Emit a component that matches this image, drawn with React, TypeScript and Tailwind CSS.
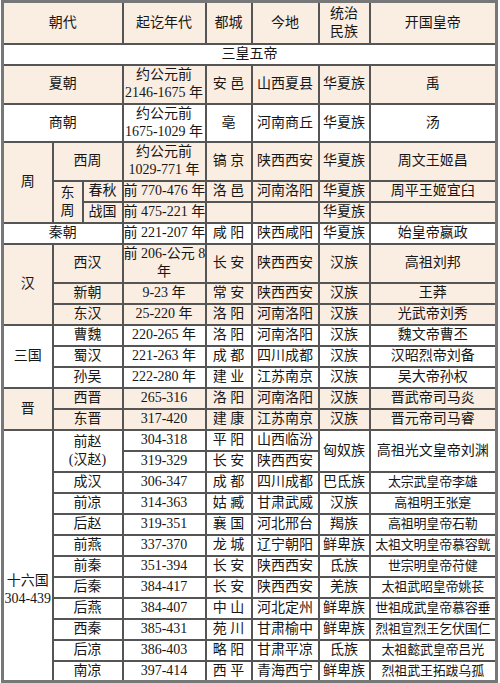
import React from 'react'

const cell = 'border-2 border-[#555] text-center align-middle p-0 leading-[18px] whitespace-nowrap'

const sixteen = [
  ['成汉', '306-347', '成 都', '四川成都', '巴氐族', '太宗武皇帝李雄'],
  ['前凉', '314-363', '姑 臧', '甘肃武威', '汉族', '高祖明王张寔'],
  ['后赵', '319-351', '襄 国', '河北邢台', '羯族', '高祖明皇帝石勒'],
  ['前燕', '337-370', '龙 城', '辽宁朝阳', '鲜卑族', '太祖文明皇帝慕容皝'],
  ['前秦', '351-394', '长 安', '陕西西安', '氐族', '世宗明皇帝苻健'],
  ['后秦', '384-417', '长 安', '陕西西安', '羌族', '太祖武昭皇帝姚苌'],
  ['后燕', '384-407', '中 山', '河北定州', '鲜卑族', '世祖成武皇帝慕容垂'],
  ['西秦', '385-431', '苑 川', '甘肃榆中', '鲜卑族', '烈祖宣烈王乞伏国仁'],
  ['后凉', '386-403', '略 阳', '甘肃平凉', '氐族', '太祖懿武皇帝吕光'],
  ['南凉', '397-414', '西 平', '青海西宁', '鲜卑族', '烈祖武王拓跋乌孤'],
]

const peach = 'bg-[#faede2]'

export default function App() {
  return (
    <div className="w-[500px] h-[683px] bg-white overflow-hidden text-[#161616] text-[14px]" style={{ fontFamily: '"Liberation Serif", "Noto Sans CJK SC", serif' }}>
      <table className="ml-px w-[497px] table-fixed border-collapse border-[3px] border-[#777]">
        <colgroup>
          <col className="w-[50px]" />
          <col className="w-[30px]" />
          <col className="w-[40px]" />
          <col className="w-[83px]" />
          <col className="w-[46px]" />
          <col className="w-[67px]" />
          <col className="w-[51px]" />
          <col />
        </colgroup>
        <tbody>
          <tr className={`h-[42px] ${peach}`}>
            <td colSpan={3} className={cell}>朝代</td>
            <td className={cell}>起讫年代</td>
            <td className={cell}>都城</td>
            <td className={cell}>今地</td>
            <td className={cell}>统治<br />民族</td>
            <td className={cell}>开国皇帝</td>
          </tr>
          <tr className="h-[21px]">
            <td colSpan={8} className={cell}>三皇五帝</td>
          </tr>
          <tr className={`h-[39px] ${peach}`}>
            <td colSpan={3} className={cell}>夏朝</td>
            <td className={cell}>约公元前<br />2146-1675 年</td>
            <td className={cell}>安 邑</td>
            <td className={cell}>山西夏县</td>
            <td className={cell}>华夏族</td>
            <td className={cell}>禹</td>
          </tr>
          <tr className="h-[37px]">
            <td colSpan={3} className={cell}>商朝</td>
            <td className={cell}>约公元前<br />1675-1029 年</td>
            <td className={cell}>亳</td>
            <td className={cell}>河南商丘</td>
            <td className={cell}>华夏族</td>
            <td className={cell}>汤</td>
          </tr>
          <tr className={`h-[39px] ${peach}`}>
            <td rowSpan={3} className={cell}>周</td>
            <td colSpan={2} className={cell}>西周</td>
            <td className={cell}>约公元前<br />1029-771 年</td>
            <td className={cell}>镐 京</td>
            <td className={cell}>陕西西安</td>
            <td className={cell}>华夏族</td>
            <td className={cell}>周文王姬昌</td>
          </tr>
          <tr className={`h-[21px] ${peach}`}>
            <td rowSpan={2} className={cell}>东<br />周</td>
            <td className={cell}>春秋</td>
            <td className={cell}>前 770-476 年</td>
            <td className={cell}>洛 邑</td>
            <td className={cell}>河南洛阳</td>
            <td className={cell}>华夏族</td>
            <td className={cell}>周平王姬宜臼</td>
          </tr>
          <tr className={`h-[21px] ${peach}`}>
            <td className={cell}>战国</td>
            <td className={cell}>前 475-221 年</td>
            <td className={cell}></td>
            <td className={cell}></td>
            <td className={cell}>华夏族</td>
            <td className={cell}></td>
          </tr>
          <tr className="h-[21px]">
            <td colSpan={3} className={cell}>秦朝</td>
            <td className={cell}>前 221-207 年</td>
            <td className={cell}>咸 阳</td>
            <td className={cell}>陕西咸阳</td>
            <td className={cell}>华夏族</td>
            <td className={cell}>始皇帝嬴政</td>
          </tr>
          <tr className={`h-[39px] ${peach}`}>
            <td rowSpan={3} className={cell}>汉</td>
            <td colSpan={2} className={cell}>西汉</td>
            <td className={cell}>前 206-公元 8<br />年</td>
            <td className={cell}>长 安</td>
            <td className={cell}>陕西西安</td>
            <td className={cell}>汉族</td>
            <td className={cell}>高祖刘邦</td>
          </tr>
          <tr className={`h-[21px] ${peach}`}>
            <td colSpan={2} className={cell}>新朝</td>
            <td className={cell}>9-23 年</td>
            <td className={cell}>常 安</td>
            <td className={cell}>陕西西安</td>
            <td className={cell}>汉族</td>
            <td className={cell}>王莽</td>
          </tr>
          <tr className={`h-[21px] ${peach}`}>
            <td colSpan={2} className={cell}>东汉</td>
            <td className={cell}>25-220 年</td>
            <td className={cell}>洛 阳</td>
            <td className={cell}>河南洛阳</td>
            <td className={cell}>汉族</td>
            <td className={cell}>光武帝刘秀</td>
          </tr>
          <tr className="h-[21px]">
            <td rowSpan={3} className={cell}>三国</td>
            <td colSpan={2} className={cell}>曹魏</td>
            <td className={cell}>220-265 年</td>
            <td className={cell}>洛 阳</td>
            <td className={cell}>河南洛阳</td>
            <td className={cell}>汉族</td>
            <td className={cell}>魏文帝曹丕</td>
          </tr>
          <tr className="h-[21px]">
            <td colSpan={2} className={cell}>蜀汉</td>
            <td className={cell}>221-263 年</td>
            <td className={cell}>成 都</td>
            <td className={cell}>四川成都</td>
            <td className={cell}>汉族</td>
            <td className={cell}>汉昭烈帝刘备</td>
          </tr>
          <tr className="h-[21px]">
            <td colSpan={2} className={cell}>孙吴</td>
            <td className={cell}>222-280 年</td>
            <td className={cell}>建 业</td>
            <td className={cell}>江苏南京</td>
            <td className={cell}>汉族</td>
            <td className={cell}>吴大帝孙权</td>
          </tr>
          <tr className={`h-[21px] ${peach}`}>
            <td rowSpan={2} className={cell}>晋</td>
            <td colSpan={2} className={cell}>西晋</td>
            <td className={cell}>265-316</td>
            <td className={cell}>洛 阳</td>
            <td className={cell}>河南洛阳</td>
            <td className={cell}>汉族</td>
            <td className={cell}>晋武帝司马炎</td>
          </tr>
          <tr className={`h-[21px] ${peach}`}>
            <td colSpan={2} className={cell}>东晋</td>
            <td className={cell}>317-420</td>
            <td className={cell}>建 康</td>
            <td className={cell}>江苏南京</td>
            <td className={cell}>汉族</td>
            <td className={cell}>晋元帝司马睿</td>
          </tr>
          <tr className="h-[21px]">
            <td rowSpan={12} className={`${cell} pt-[69px]`}>十六国<br />304-439</td>
            <td rowSpan={2} colSpan={2} className={cell}>前赵<br />(汉赵)</td>
            <td className={cell}>304-318</td>
            <td className={cell}>平 阳</td>
            <td className={cell}>山西临汾</td>
            <td rowSpan={2} className={cell}>匈奴族</td>
            <td rowSpan={2} className={cell}>高祖光文皇帝刘渊</td>
          </tr>
          <tr className="h-[21px]">
            <td className={cell}>319-329</td>
            <td className={cell}>长 安</td>
            <td className={cell}>陕西西安</td>
          </tr>
          {sixteen.map(r => (
            <tr key={r[0]} className="h-[21px]">
              <td colSpan={2} className={cell}>{r[0]}</td>
              <td className={cell}>{r[1]}</td>
              <td className={cell}>{r[2]}</td>
              <td className={cell}>{r[3]}</td>
              <td className={cell}>{r[4]}</td>
              <td className={`${cell} text-[13px] tracking-[-0.2px]`}>{r[5]}</td>
            </tr>
          ))}
        </tbody>
      </table>
    </div>
  )
}
